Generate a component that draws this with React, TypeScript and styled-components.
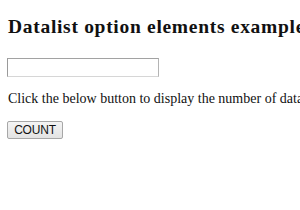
import styled, { createGlobalStyle } from "styled-components";

const GlobalStyle = createGlobalStyle`
  html, body {
    margin: 0;
    overflow: hidden;
    background: #ffffff;
  }
`;

const Page = styled.div`
  padding: 16px 8px;
  font-family: "Liberation Serif", "Times New Roman", serif;
  color: #111111;
`;

const Title = styled.h3`
  margin: 0;
  font-size: 19.5px;
  line-height: 22px;
  letter-spacing: 0.7px;
  font-weight: bold;
  white-space: nowrap;
`;

const DataInput = styled.input`
  display: block;
  box-sizing: border-box;
  margin: 20px 0 0 -1px;
  width: 152px;
  height: 19px;
  padding: 1px 2px;
  border: 1px solid;
  border-color: #a2a2a2 #b4b4b4 #d6d6d6 #9a9a9a;
  background: #ffffff;
  font: 13px "Liberation Sans", Arial, sans-serif;
  outline: none;
`;

const Text = styled.p`
  margin: 13px 0 0;
  font-size: 14px;
  line-height: 18px;
  white-space: nowrap;
`;

const CountButton = styled.button`
  display: block;
  box-sizing: border-box;
  margin: 13px 0 0 -1px;
  width: 56px;
  height: 18px;
  padding: 0;
  border: 1px solid #a7a7a7;
  border-radius: 2px;
  background: linear-gradient(#f4f4f4, #e3e3e3);
  font: 12px "Liberation Sans", Arial, sans-serif;
  letter-spacing: -0.2px;
  color: #111111;
  line-height: 16px;
`;

export default function App() {
  return (
    <>
      <GlobalStyle />
      <Page>
        <Title>Datalist option elements example</Title>
        <DataInput list="items" />
        <datalist id="items">
          <option value="One" />
          <option value="Two" />
          <option value="Three" />
        </datalist>
        <Text>Click the below button to display the number of datalist options</Text>
        <CountButton>COUNT</CountButton>
      </Page>
    </>
  );
}
